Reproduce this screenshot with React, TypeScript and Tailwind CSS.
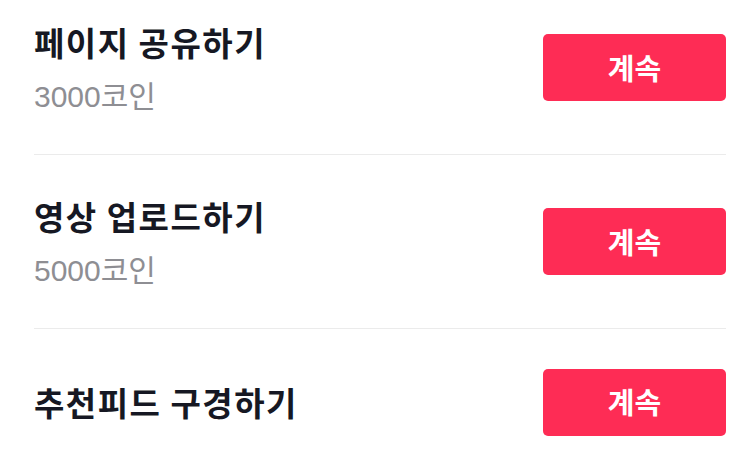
const tasks = [
  { title: '페이지 공유하기', reward: '3000코인' },
  { title: '영상 업로드하기', reward: '5000코인' },
  { title: '추천피드 구경하기' },
]

function TaskRow({ title, reward, last }: { title: string; reward?: string; last?: boolean }) {
  return (
    <div className={last ? '' : 'border-b border-[#ebebeb]'}>
      <div className={`flex items-center justify-between ${last ? 'h-[146px]' : 'h-[173px]'}`}>
        <div className="flex flex-col">
          <span className="text-[33px] font-bold leading-[40px] tracking-[1.5px] text-[#161823]">{title}</span>
          {reward && (
            <span
              className="mt-[18px] text-[30px] leading-[34px] text-[#8e8e93]"
              style={{ fontFamily: '"Liberation Sans", "Noto Sans CJK KR", sans-serif' }}
            >
              {reward}
            </span>
          )}
        </div>
        <button className="flex h-[67px] w-[183px] items-center justify-center rounded-[5px] bg-[#fe2c55] text-[29px] font-bold text-white">
          계속
        </button>
      </div>
    </div>
  )
}

export default function App() {
  return (
    <div
      className="h-[451px] w-[748px] overflow-hidden bg-white"
      style={{ fontFamily: '"Noto Sans CJK KR", "Noto Sans", sans-serif' }}
    >
      <div className="-mt-[19px] pl-[34px] pr-[22px]">
        {tasks.map((t, i) => (
          <TaskRow key={t.title} title={t.title} reward={t.reward} last={i === tasks.length - 1} />
        ))}
      </div>
    </div>
  )
}
